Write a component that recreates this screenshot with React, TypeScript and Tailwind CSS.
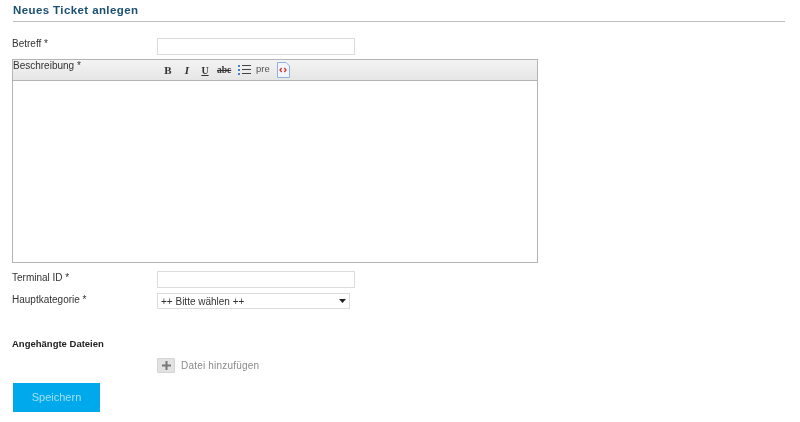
import type { ReactNode } from 'react'

const font = { fontFamily: '"Liberation Sans", Arial, sans-serif' }
const serif = { fontFamily: '"Liberation Serif", serif' }

function Field({ label, labelClass, children }: { label: string; labelClass: string; children: ReactNode }) {
  return (
    <div className="flex items-start">
      <label className={labelClass}>{label}</label>
      {children}
    </div>
  )
}

function Toolbar() {
  return (
    <div className="flex items-center ml-[149px] h-[20px] text-[#333]">
      <span className="w-[12px] text-center text-[11px] font-bold" style={serif}>B</span>
      <span className="w-[12px] ml-[7px] text-center text-[11px] italic font-bold" style={serif}>I</span>
      <span className="w-[12px] ml-[6px] text-center text-[10px] font-bold underline" style={serif}>U</span>
      <span className="w-[14px] ml-[6px] text-center text-[9.5px] font-bold line-through" style={serif}>abc</span>
      <svg width="13" height="12" viewBox="0 0 13 12" className="ml-[7px]">
        <rect x="0" y="1" width="2" height="2" fill="#4a7fc4" />
        <rect x="0" y="5" width="2" height="2" fill="#4a7fc4" />
        <rect x="0" y="9" width="2" height="2" fill="#4a7fc4" />
        <rect x="4" y="1" width="9" height="1" fill="#444" />
        <rect x="4" y="5" width="9" height="1" fill="#444" />
        <rect x="4" y="9" width="9" height="1" fill="#444" />
      </svg>
      <span className="ml-[5px] w-[16px] text-[9.5px] text-[#555] leading-none -mt-[3px]">pre</span>
      <svg width="13" height="16" viewBox="0 0 13 16" className="ml-[5px]">
        <path d="M.5 .5H9L12.500 4V15.500H.5Z" fill="#f2f6fc" stroke="#8fb0dc" />
        <path d="M4.700 6 3 8 4.700 10M7.300 6 9 8 7.300 10" fill="none" stroke="#d0342c" strokeWidth="1.300" />
      </svg>
    </div>
  )
}

export default function App() {
  return (
    <div className="w-[800px] h-[422px] bg-white overflow-hidden pl-[12px] pt-[4px] blur-[0.4px]" style={font}>
      <h1 className="text-[11.5px] leading-[13px] ml-[1px] font-bold text-[#1a4f72] tracking-[0.4px]">Neues Ticket anlegen</h1>
      <div className="w-[772px] h-[1px] mt-[4px] ml-[1px] bg-[#bdbdbd]" />

      <div className="mt-[16px]">
        <Field label="Betreff *" labelClass="w-[145px] text-[10px] leading-[12px] text-[#333]">
          <input className="w-[198px] h-[17px] bg-white border border-[#dcdcdc] outline-none" />
        </Field>
      </div>

      <div className="relative mt-[4px] w-[526px] h-[204px] border border-[#b4b4b4] bg-white">
        <div className="h-[21px] bg-gradient-to-b from-[#f3f3f3] to-[#e6e6e6] border-b border-[#b4b4b4]">
          <Toolbar />
        </div>
        <span className="absolute left-0 top-0 text-[10px] leading-[12px] text-[#333]">Beschreibung *</span>
      </div>

      <div className="mt-[8px]">
        <Field label="Terminal ID *" labelClass="w-[145px] pt-[1px] text-[10px] leading-[12px] text-[#333]">
          <input className="w-[198px] h-[17px] bg-white border border-[#dcdcdc] outline-none" />
        </Field>
      </div>

      <div className="mt-[5px]">
        <Field label="Hauptkategorie *" labelClass="w-[145px] pt-[1px] text-[10px] leading-[12px] text-[#333]">
          <div className="flex items-center justify-between w-[193px] h-[16px] pl-[3px] pr-[3px] bg-white border border-[#dcdcdc] text-[10px] text-[#333]">
            <span>++ Bitte wählen ++</span>
            <svg width="7" height="4" viewBox="0 0 7 4"><path d="M0 0H7L3.500 4Z" fill="#222" /></svg>
          </div>
        </Field>
      </div>

      <p className="mt-[29px] text-[9.5px] leading-[12px] font-bold text-[#222]">Angehängte Dateien</p>

      <div className="flex items-center ml-[145px] mt-[8px] h-[15px]">
        <div className="flex items-center justify-center w-[18px] h-[15px] bg-[#e2e2e2] border border-[#d4d4d4] rounded-[1px]">
          <svg width="9" height="9" viewBox="0 0 9 9"><path d="M3.500 0h2v3.500H9v2H5.500V9h-2V5.500H0v-2h3.500Z" fill="#777" /></svg>
        </div>
        <span className="ml-[6px] text-[10px] text-[#8a8a8a] tracking-[0.2px]">Datei hinzufügen</span>
      </div>

      <button className="block mt-[10px] ml-[1px] w-[87px] h-[29px] bg-[#00a9ec] text-[#9fe0f8] text-[11px] border-none">Speichern</button>
    </div>
  )
}
